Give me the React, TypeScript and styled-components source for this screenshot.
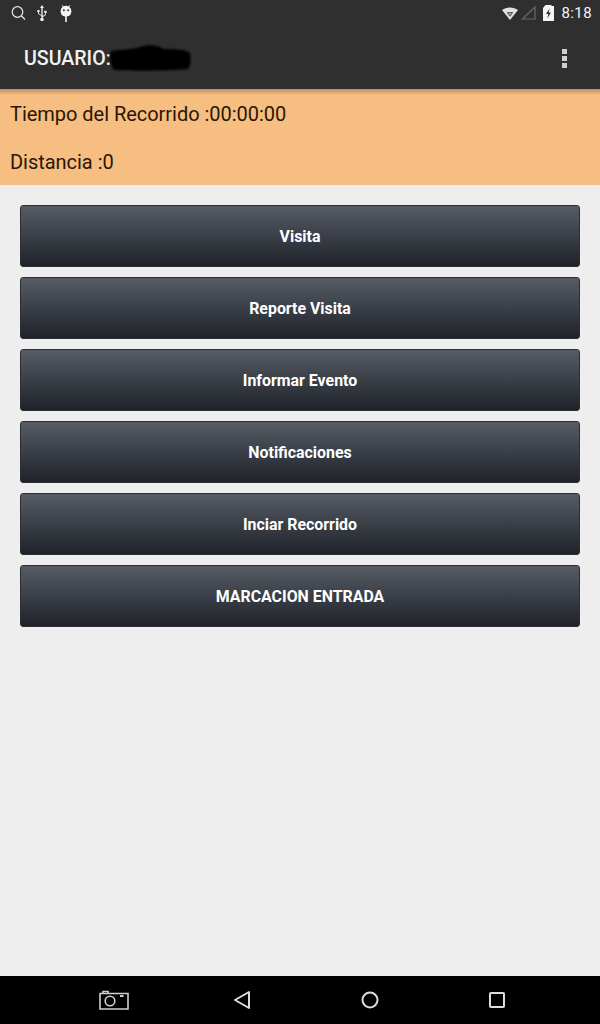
import React from 'react'
import styled, { createGlobalStyle } from 'styled-components'

const GlobalStyle = createGlobalStyle`
html, body {
  margin: 0;
  padding: 0;
  background: #eeeeee;
}
* { box-sizing: border-box; }
`

const Screen = styled.div`
width: 600px;
height: 1024px;
display: flex;
flex-direction: column;
background: #eeeeee;
font-family: Roboto, "Liberation Sans", sans-serif;
overflow: hidden;
`

const ActionBar = styled.header`
height: 89px;
flex: none;
background: #2f2f2f;
display: flex;
flex-direction: column;
`

const StatusBar = styled.div`
height: 25px;
flex: none;
display: flex;
align-items: center;
justify-content: space-between;
padding: 0 8px 0 10px;
`

const StatusGroup = styled.div`
display: flex;
align-items: center;
`

const StatusIcon = styled.svg<{ $left?: number }>`
flex: none;
margin-left: ${p => p.$left || 0}px;
`

const Clock = styled.span`
color: #f4f4f4;
font-size: 15px;
letter-spacing: 0.4px;
margin-left: 7px;
`

const TitleRow = styled.div`
flex: 1;
display: flex;
align-items: center;
justify-content: space-between;
padding: 2px 33px 0 24px;
`

const Title = styled.div`
display: flex;
align-items: center;
color: #f2f2f2;
font-size: 19.6px;
font-weight: 500;
`

const Smudge = styled.svg`
margin-left: -3px;
`

const MenuDots = styled.div`
display: flex;
flex-direction: column;
gap: 2px;
`

const Dot = styled.span`
width: 5px;
height: 5px;
background: #cfcfcf;
`

const InfoPanel = styled.section`
height: 96px;
flex: none;
position: relative;
background: #f6be80;
padding: 10px 10px 0;
color: #2a1706;
font-size: 20px;
letter-spacing: -0.03px;
line-height: 30px;
&::before {
  content: "";
  position: absolute;
  top: 0;
  left: 0;
  right: 0;
  height: 6px;
  background: linear-gradient(#b99163, #f6be80);
}
`

const InfoLine = styled.div`
height: 48px;
position: relative;
`

const ButtonList = styled.main`
flex: 1;
display: flex;
flex-direction: column;
gap: 10px;
padding: 20px 20px 0;
`

const MenuButton = styled.button`
height: 62px;
flex: none;
width: 100%;
border: 1px solid #2b2e34;
border-radius: 3px;
background: linear-gradient(#565c65, #1f2229);
color: #ffffff;
font-family: inherit;
font-size: 15.9px;
font-weight: 700;
padding: 0;
`

const NavBar = styled.nav`
height: 48px;
flex: none;
background: #000000;
display: flex;
align-items: center;
padding: 0 0 0 99px;
`

const NavIcon = styled.svg<{ $left?: number }>`
flex: none;
margin-left: ${p => p.$left || 0}px;
`

const menuItems = ['Visita', 'Reporte Visita', 'Informar Evento', 'Notificaciones', 'Inciar Recorrido', 'MARCACION ENTRADA']

function App() {
    return (
        <Screen>
            <GlobalStyle />
            <ActionBar>
                <StatusBar>
                    <StatusGroup>
                        <StatusIcon width="16" height="16" viewBox="0 0 16 16" fill="none" stroke="#e8e8e8" strokeWidth="1.2">
                            <circle cx="7.500" cy="7" r="5.300" />
                            <path d="M11.500 11l3.500 3.500" />
                        </StatusIcon>
                        <StatusIcon $left={9} width="14" height="16" viewBox="0 0 14 16" fill="#ececec">
                            <path d="M7 0l2 3H7.700v8l2.300-1.500V8H9.200V5.800h2.400V8h-.8v2.100L7.700 12.200v.9a1.700 1.700 0 1 1-1.400 0v-2.200L3 8.800V7.200a1.200 1.200 0 1 1 .9 0v1.200l2.400 1.500V3H5z" />
                        </StatusIcon>
                        <StatusIcon $left={10} width="14" height="18" viewBox="0 0 14 18" fill="#f4f4f4">
                            <path d="M3.200 1l1.300 1.300a5.400 5.400 0 0 1 5 0L10.800 1l.5.500-1.100 1.300A5.500 5.500 0 0 1 12.400 7.300a5.400 5.400 0 0 1-4.600 5.300V18H6.200v-5.400a5.400 5.400 0 0 1-4.600-5.300 5.500 5.500 0 0 1 2.200-4.500L2.700 1.500z" />
                            <circle cx="4.900" cy="6.200" r="1" fill="#2f2f2f" />
                            <circle cx="9.100" cy="6.200" r="1" fill="#2f2f2f" />
                        </StatusIcon>
                    </StatusGroup>
                    <StatusGroup>
                        <StatusIcon width="16" height="14" viewBox="0 0 16 14">
                            <path d="M0 4C4.200.6 11.800.6 16 4L8 14z" fill="#e2e2e2" />
                            <path d="M4.700 6.200h6.600L8 10.800z" fill="#3a3a3a" />
                            <path d="M6.500 7.300h3L8 9.400z" fill="#d8d8d8" />
                        </StatusIcon>
                        <StatusIcon $left={3} width="15" height="14" viewBox="0 0 15 14" fill="none" stroke="#6a6a6a" strokeWidth="1.200">
                            <path d="M1.500 13L14 1v12z" />
                        </StatusIcon>
                        <StatusIcon $left={7} width="11" height="16" viewBox="0 0 11 16">
                            <path d="M2.500 0h6v1H11V16H0V3z" fill="#f4f4f4" />
                            <path d="M6.500 3.500L3 9h2.300l-1 4.500L8 7.500H5.700z" fill="#2f2f2f" />
                        </StatusIcon>
                        <Clock>8:18</Clock>
                    </StatusGroup>
                </StatusBar>
                <TitleRow>
                    <Title>
                        USUARIO:
                        <Smudge width="84" height="28" viewBox="0 0 84 28">
                            <defs>
                                <filter id="smudge">
                                    <feGaussianBlur stdDeviation="1.200" />
                                </filter>
                            </defs>
                            <path d="M3 7C14 5 24 6 32 3C40 0 50 1 56 5C66 5 78 5 82 9C83 15 83 21 80 25C60 27 20 27 6 26C2 20 1 13 3 7z" fill="#000000" filter="url(#smudge)" />
                        </Smudge>
                    </Title>
                    <MenuDots>
                        <Dot />
                        <Dot />
                        <Dot />
                    </MenuDots>
                </TitleRow>
            </ActionBar>
            <InfoPanel>
                <InfoLine>Tiempo del Recorrido :00:00:00</InfoLine>
                <InfoLine>Distancia :0</InfoLine>
            </InfoPanel>
            <ButtonList>
                {menuItems.map(item => <MenuButton key={item}>{item}</MenuButton>)}
            </ButtonList>
            <NavBar>
                <NavIcon width="30" height="20" viewBox="0 0 30 20" fill="none" stroke="#cfcfcf" strokeWidth="1.600">
                    <path d="M1 3.500h28v15.500H1z" />
                    <path d="M4 3V1.500h5V3" />
                    <circle cx="11" cy="11" r="4.800" />
                    <path d="M21 6h3.500" strokeWidth="2" />
                </NavIcon>
                <NavIcon $left={104} width="18" height="20" viewBox="0 0 18 20" fill="none" stroke="#dcdcdc" strokeWidth="2">
                    <path d="M16 2v16L2 10z" strokeLinejoin="round" />
                </NavIcon>
                <NavIcon $left={110} width="18" height="18" viewBox="0 0 18 18" fill="none" stroke="#dcdcdc" strokeWidth="2">
                    <circle cx="9" cy="9" r="7.500" />
                </NavIcon>
                <NavIcon $left={110} width="16" height="16" viewBox="0 0 16 16" fill="none" stroke="#dcdcdc" strokeWidth="2">
                    <rect x="1" y="1" width="14" height="14" rx="1" />
                </NavIcon>
            </NavBar>
        </Screen>
    )
}

export default App
